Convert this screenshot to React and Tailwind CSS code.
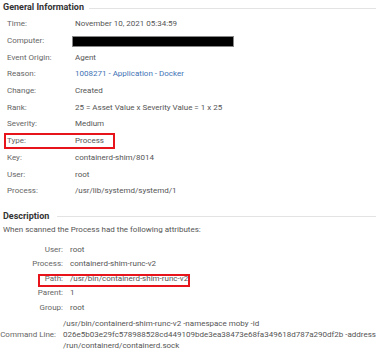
export default function App() {
  const general = [
    ["Time:", "November 10, 2021 05:34:59"],
    ["Computer:", null],
    ["Event Origin:", "Agent"],
    ["Reason:", "1008271 - Application - Docker", "link"],
    ["Change:", "Created"],
    ["Rank:", "25 = Asset Value x Severity Value = 1 x 25"],
    ["Severity:", "Medium"],
    ["Type:", "Process", "box"],
    ["Key:", "containerd-shim/8014"],
    ["User:", "root"],
    ["Process:", "/usr/lib/systemd/systemd/1"],
  ];
  const desc = [
    ["User:", "root"],
    ["Process:", "containerd-shim-runc-v2"],
    ["Path:", "/usr/bin/containerd-shim-runc-v2", "box"],
    ["Parent:", "1"],
    ["Group:", "root"],
  ];
  return (
    <div
      className="w-[376px] h-[352px] bg-white overflow-hidden text-[8px] text-[#555]"
      style={{ fontFamily: "Roboto, 'Liberation Sans', sans-serif" }}
    >
      <div className="flex items-center h-[16px] pl-[3px] gap-[5px]">
        <span className="text-[9px] font-bold text-[#333] whitespace-nowrap">General Information</span>
        <div className="flex-1 h-px bg-[#e3e3e3]" />
      </div>
      <div className="flex flex-col">
        {general.map(([l, v, k]) => (
          <div key={l} className="relative flex items-center h-[16.7px] whitespace-nowrap">
            <span className="w-[75px] pl-[7px] text-[#666]">{l}</span>
            {v === null ? (
              <span className="ml-[-3px] w-[162px] h-[11px] bg-black border border-[#888]" />
            ) : (
              <span className={k === "link" ? "text-[#3f73b5]" : ""}>{v}</span>
            )}
            {k === "box" && (
              <span className="absolute left-[4px] top-[0px] w-[111px] h-[16px] border-2 border-[#e8141c]" />
            )}
          </div>
        ))}
      </div>
      <div className="flex items-center h-[16px] pl-[3px] gap-[8px] mt-[9px]">
        <span className="text-[9px] font-bold text-[#333]">Description</span>
        <div className="flex-1 h-px bg-[#e3e3e3]" />
      </div>
      <div className="pl-[3px] h-[10px] flex items-center whitespace-nowrap">When scanned the Process had the following attributes:</div>
      <div className="flex flex-col mt-[8px]">
        {desc.map(([l, v, k]) => (
          <div key={l} className="relative flex items-center h-[14.5px] whitespace-nowrap">
            <span className="w-[63px] text-right text-[#666]">{l}</span>
            <span className="ml-[7px]">{v}</span>
            {k === "box" && (
              <span className="absolute left-[38px] top-[2px] w-[152px] h-[13px] border-2 border-[#e8141c]" />
            )}
          </div>
        ))}
        <div className="flex items-center mt-[3px] whitespace-nowrap">
          <span className="w-[63px] text-right text-[#666]">Command Line:</span>
          <span className="ml-[7px] leading-[11px]">
            /usr/bin/containerd-shim-runc-v2 -namespace moby -id
            <br />
            026e5b03e29fc578988528cd449109bde3ea38473e68fa349618d787a290df2b -address
            <br />
            /run/containerd/containerd.sock
          </span>
        </div>
      </div>
    </div>
  );
}
